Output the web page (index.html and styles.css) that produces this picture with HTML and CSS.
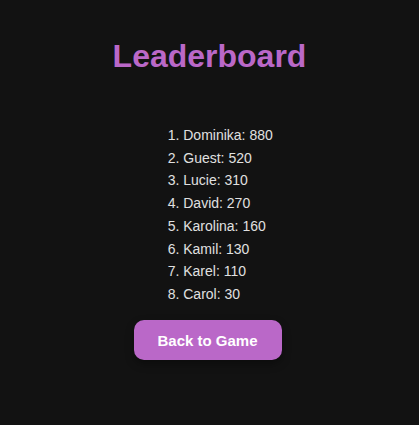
FILE: index.html
```html
<!DOCTYPE html>
<html>
<head>
<meta charset="utf-8">
<link rel="stylesheet" href="styles.css">
</head>
<body>
<div class="page">
  <h1 class="title">Leaderboard</h1>
  <ol class="scores">
    <li>Dominika: 880</li>
    <li>Guest: 520</li>
    <li>Lucie: 310</li>
    <li>David: 270</li>
    <li>Karolina: 160</li>
    <li>Kamil: 130</li>
    <li>Karel: 110</li>
    <li>Carol: 30</li>
  </ol>
  <div class="actions">
    <button class="back-btn">Back to Game</button>
  </div>
</div>
</body>
</html>
```
FILE: styles.css
```css
html, body {
  margin: 0;
  padding: 0;
  background: #121212;
  height: 100%;
}
body {
  font-family: "Liberation Sans", Arial, sans-serif;
  color: #e0e0e0;
}
.page {
  display: flex;
  flex-direction: column;
  align-items: center;
  padding-top: 37.5px;
}
.title {
  margin: 0;
  font-size: 32px;
  font-weight: bold;
  color: #ba68c8;
  line-height: 37px;
}
.scores {
  margin: 49.5px 0 0 0;
  padding: 0 0 0 37px;
  font-size: 14px;
  line-height: 22.7px;
  text-align: left;
}
.scores li {
  margin: 0;
}
.actions {
  margin-top: 14.4px;
  margin-right: 4px;
}
.back-btn {
  box-sizing: border-box;
  font-family: "Liberation Sans", Arial, sans-serif;
  font-size: 15px;
  font-weight: bold;
  color: #ffffff;
  background: #ba68c8;
  border: none;
  border-radius: 10px;
  padding: 0 20px;
  width: 148px;
  height: 40px;
  white-space: nowrap;
  box-shadow: 0 4px 8px rgba(0, 0, 0, 0.35);
  cursor: pointer;
}
```
